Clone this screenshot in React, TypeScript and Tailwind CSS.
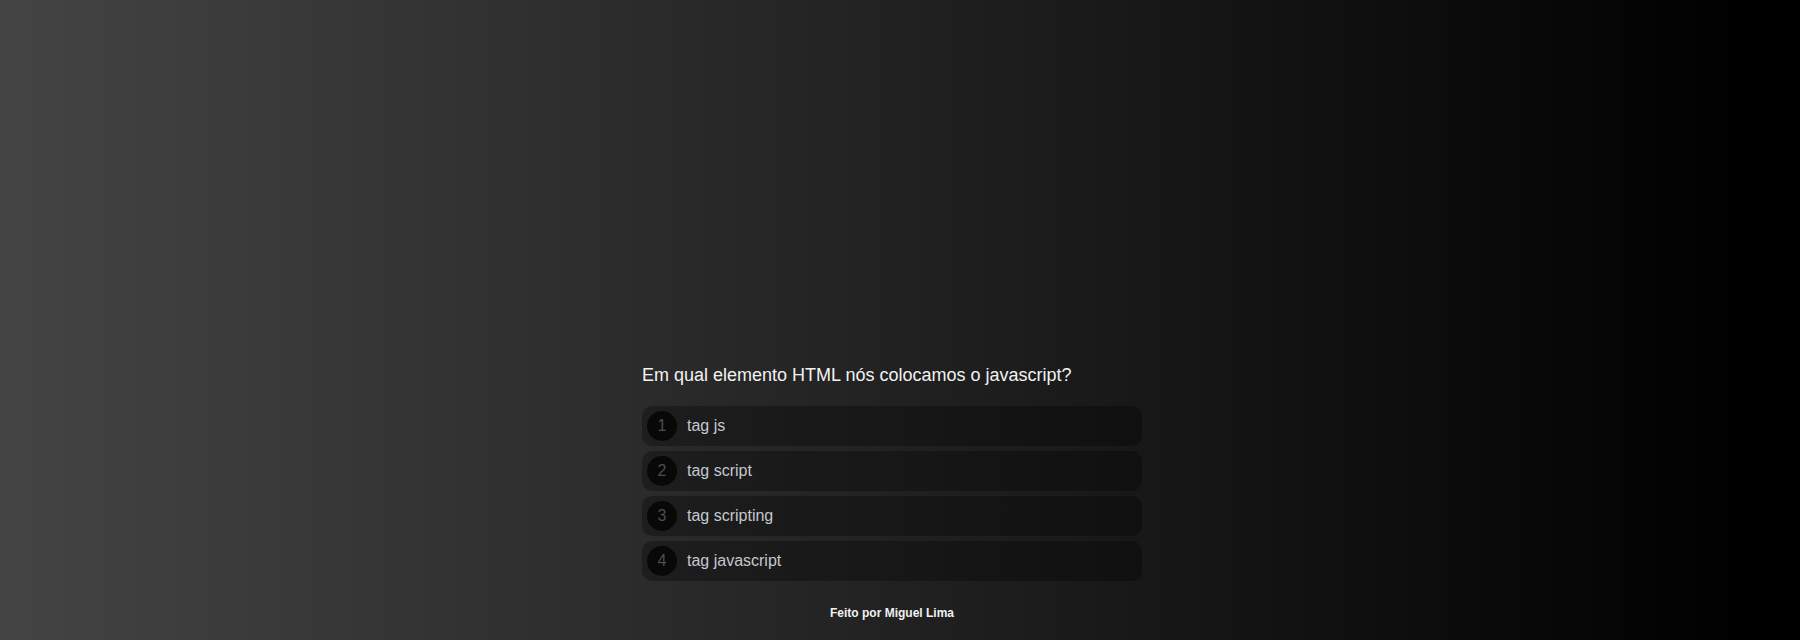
const options = ["tag js", "tag script", "tag scripting", "tag javascript"];

export default function App() {
  return (
    <div className="flex h-[640px] w-full overflow-hidden bg-black font-['Liberation_Sans',Arial,sans-serif]">
      <div className="flex h-full w-[1784px] shrink-0 flex-col items-center bg-linear-to-r/srgb from-[#444444] from-0% to-black to-[98%]">
        <main className="mt-[363px] w-[500px]">
          <h1 className="text-[18px] leading-6 text-[#f2f2f2]">
            Em qual elemento HTML nós colocamos o javascript?
          </h1>
          <ul className="mt-[19px] flex flex-col gap-[5px]">
            {options.map((opt, i) => (
              <li
                key={opt}
                className="flex h-10 items-center gap-2.5 rounded-[10px] bg-black/30 pl-[5px]"
              >
                <span className="flex h-[30px] w-[30px] items-center justify-center rounded-full bg-[#080808] text-[16px] text-[#4d4d4d]">
                  {i + 1}
                </span>
                <span className="text-[16px] text-[#c4c8cf]">{opt}</span>
              </li>
            ))}
          </ul>
        </main>
        <footer className="mt-6 text-[12px] font-bold leading-4 text-[#f0f0f0]">
          Feito por Miguel Lima
        </footer>
      </div>
    </div>
  );
}
